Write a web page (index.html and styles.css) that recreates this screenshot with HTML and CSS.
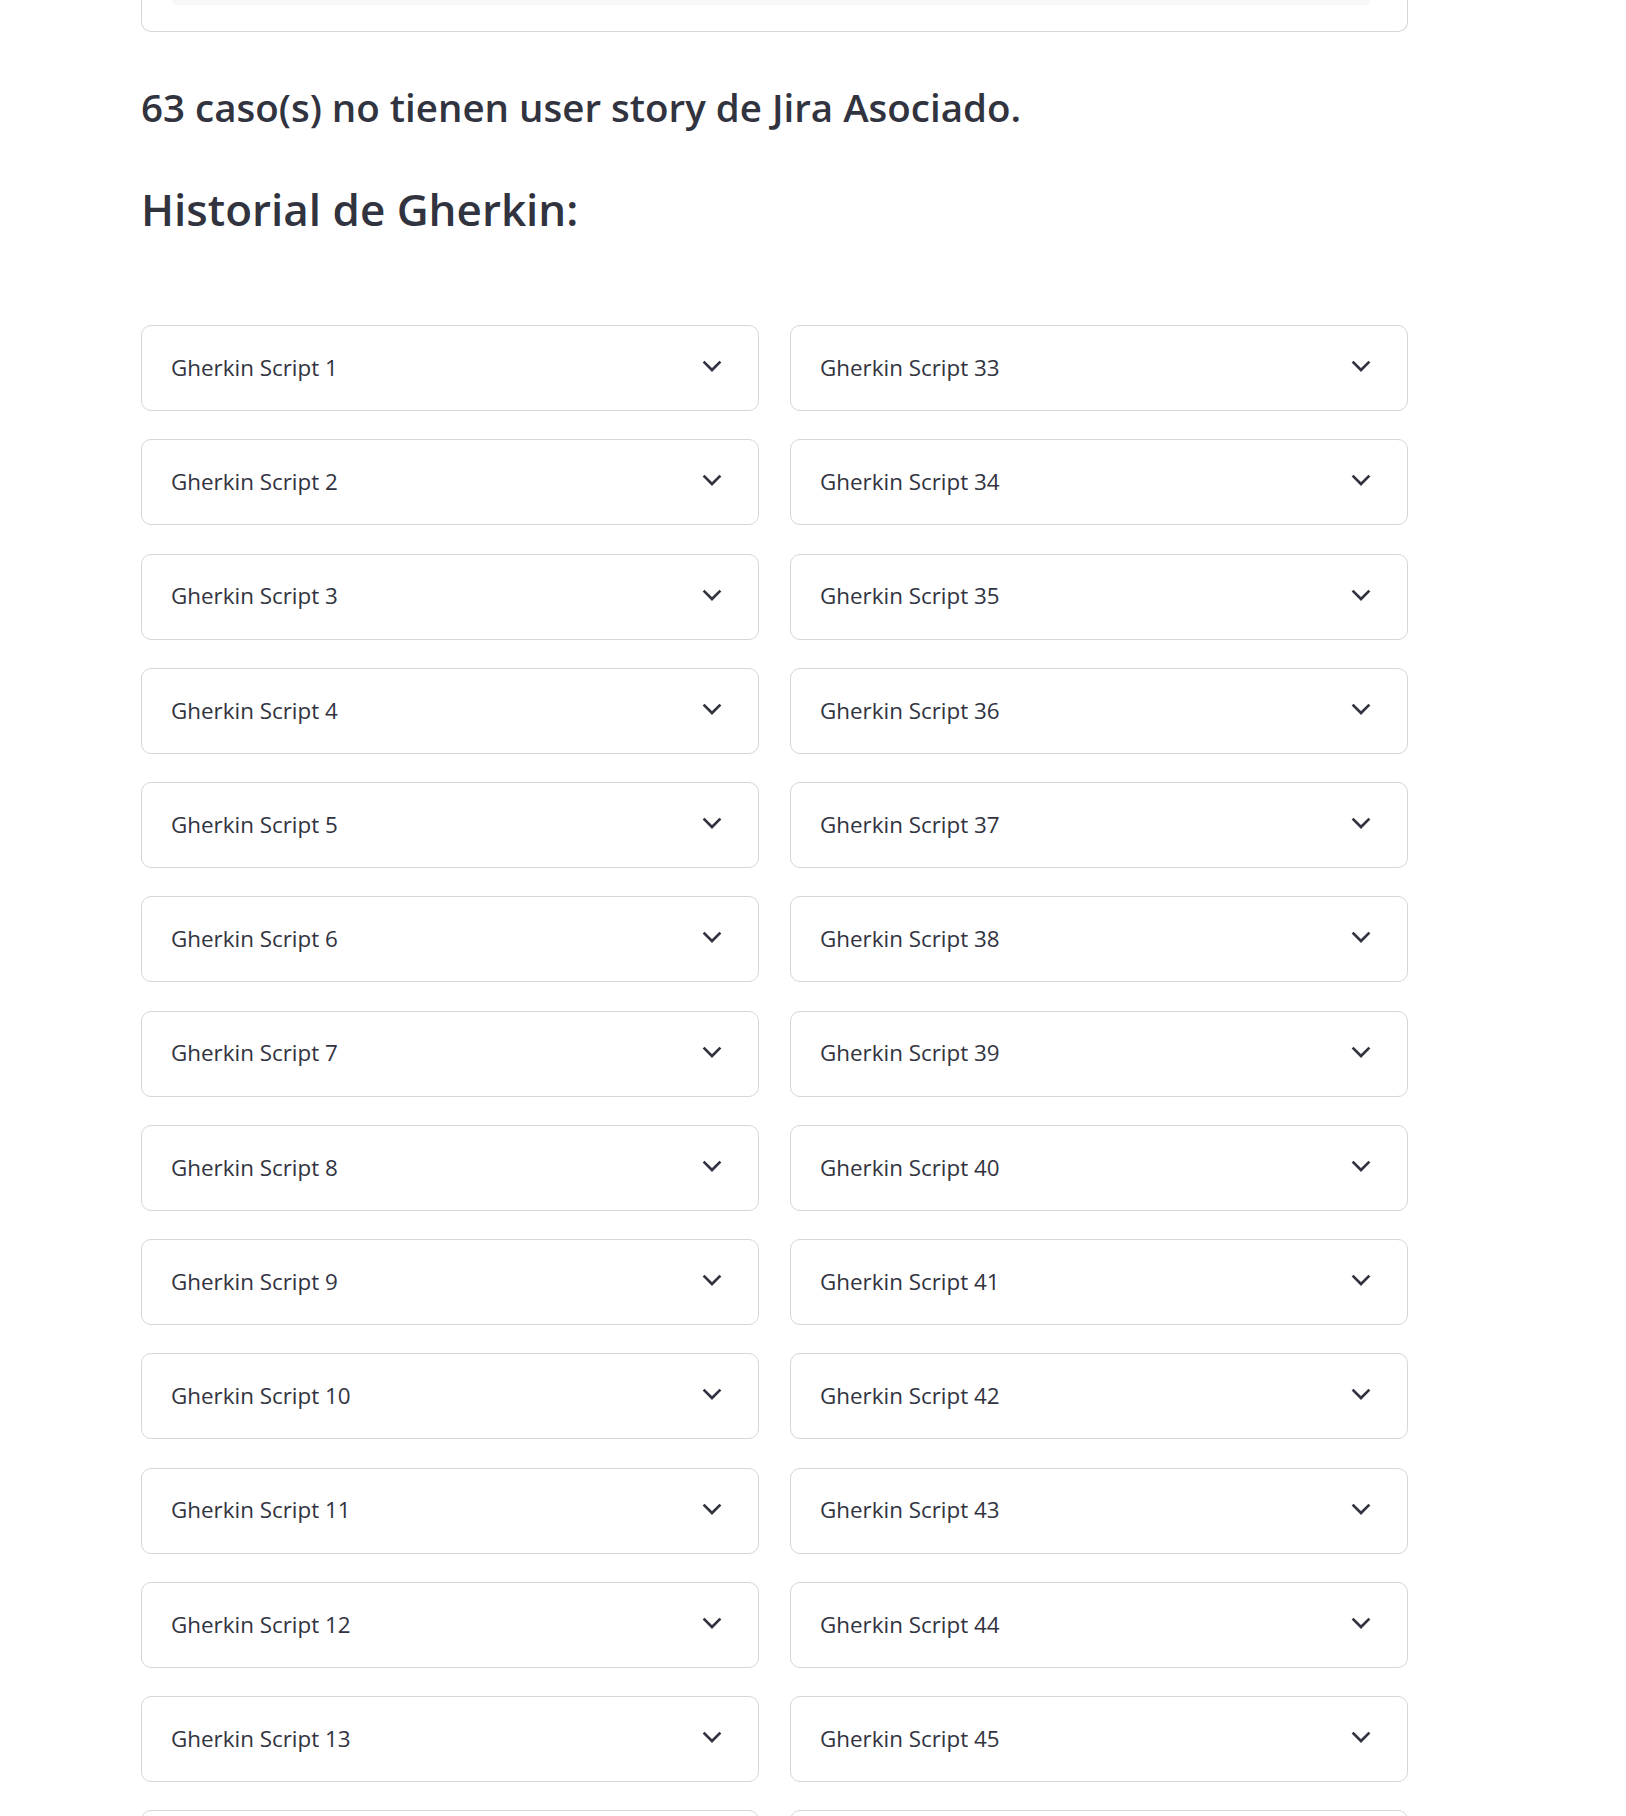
FILE: index.html
```html
<!DOCTYPE html>
<html lang="es">
<head>
<meta charset="utf-8">
<title>Historial de Gherkin</title>
<link rel="stylesheet" href="styles.css">
</head>
<body>
<main class="main">
  <div class="panel"><div class="panel-bar"></div></div>
  <h3 class="notice">63 caso(s) no tienen user story de Jira Asociado.</h3>
  <h2 class="title">Historial de Gherkin:</h2>
  <div class="columns">
    <div class="column" id="col-left"></div>
    <div class="column" id="col-right"></div>
  </div>
</main>
<script src="app.js"></script>
</body>
</html>
```
FILE: app.js
```js
(function () {
  var chevron = '<svg class="chev" width="20" height="12" viewBox="0 0 20 12" aria-hidden="true"><polyline points="1.6,1.6 10,10 18.4,1.6" fill="none" stroke="#31333f" stroke-width="2.7"/></svg>';
  function fill(id, from, to) {
    var col = document.getElementById(id);
    var html = '';
    for (var i = from; i <= to; i++) {
      html += '<details class="expander"><summary class="expander-head"><span class="expander-label">Gherkin Script ' + i + '</span>' + chevron + '</summary></details>';
    }
    col.innerHTML = html;
  }
  fill('col-left', 1, 32);
  fill('col-right', 33, 63);
})();
```
FILE: styles.css
```css
* { box-sizing: border-box; }
html, body { margin: 0; padding: 0; background: #ffffff; }
body {
  font-family: "Open Sans", "Liberation Sans", sans-serif;
  color: #31333f;
}
.main {
  width: 1267px;
  margin-left: 141px;
}
.panel {
  height: 32px;
  border: 1px solid #d6d6d9;
  border-top: none;
  border-radius: 0 0 10px 10px;
  padding: 0 36px 0 30px;
}
.panel-bar {
  height: 5px;
  background: #f7f8fa;
  border-radius: 0 0 8px 8px;
}
.notice {
  margin: 56px 0 0 0;
  font-size: 38.5px;
  line-height: 38px;
  font-weight: 600;
  letter-spacing: 0;
}
.title {
  margin: 58px 0 0 0;
  font-size: 44px;
  line-height: 50px;
  font-weight: 600;
  letter-spacing: 0;
}
.columns {
  display: flex;
  gap: 31px;
  margin-top: 91px;
}
.column {
  flex: 1 1 0;
  display: flex;
  flex-direction: column;
  gap: 28.26px;
}
.expander {
  border: 1px solid #d6d6d9;
  border-radius: 10px;
  height: 86px;
}
.expander-head {
  list-style: none;
  height: 84px;
  display: flex;
  align-items: center;
  justify-content: space-between;
  padding: 0 36px 0 29px;
  cursor: pointer;
}
.expander-head::-webkit-details-marker { display: none; }
.expander-label {
  font-size: 22.4px;
  line-height: 1;
  letter-spacing: 0;
}
.chev { margin-bottom: 4px; }
```
